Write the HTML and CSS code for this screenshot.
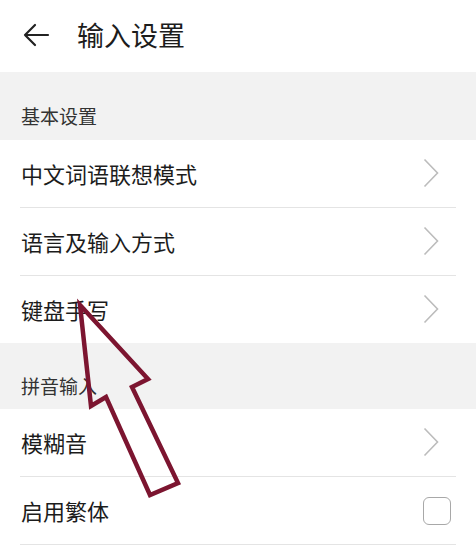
FILE: index.html
```html
<!DOCTYPE html>
<html lang="zh">
<head>
<meta charset="utf-8">
<link rel="stylesheet" href="styles.css">
</head>
<body>
<div class="page">
  <header class="topbar">
    <svg class="back" width="28" height="24" viewBox="0 0 28 24">
      <path d="M26 12H3M13 2L3 12l10 10" fill="none" stroke="#222" stroke-width="2.2" stroke-linecap="round" stroke-linejoin="round"/>
    </svg>
    <h1 class="title">输入设置</h1>
  </header>

  <div class="section">基本设置</div>
  <div class="row"><div class="inner line"><span class="label">中文词语联想模式</span><svg class="chev" width="16" height="30" viewBox="0 0 16 30"><path d="M1.5 1.5L14.5 15L1.5 28.5" fill="none" stroke="#bcbcbc" stroke-width="1.6"/></svg></div></div>
  <div class="row"><div class="inner line"><span class="label">语言及输入方式</span><svg class="chev" width="16" height="30" viewBox="0 0 16 30"><path d="M1.5 1.5L14.5 15L1.5 28.5" fill="none" stroke="#bcbcbc" stroke-width="1.6"/></svg></div></div>
  <div class="row"><div class="inner"><span class="label">键盘手写</span><svg class="chev" width="16" height="30" viewBox="0 0 16 30"><path d="M1.5 1.5L14.5 15L1.5 28.5" fill="none" stroke="#bcbcbc" stroke-width="1.6"/></svg></div></div>

  <div class="section s2">拼音输入</div>
  <div class="row"><div class="inner line"><span class="label">模糊音</span><svg class="chev" width="16" height="30" viewBox="0 0 16 30"><path d="M1.5 1.5L14.5 15L1.5 28.5" fill="none" stroke="#bcbcbc" stroke-width="1.6"/></svg></div></div>
  <div class="row"><div class="inner line"><span class="label">启用繁体</span><span class="check"></span></div></div>

  <svg class="pointer" width="476" height="549" viewBox="0 0 476 549">
    <polygon points="80,305 148,379 132,387 178,483 150,495 106,397 91,406" fill="none" stroke="#7c1530" stroke-width="4.5" stroke-linejoin="miter"/>
  </svg>
</div>
</body>
</html>
```

FILE: styles.css
```css
html, body {
  margin: 0;
  padding: 0;
  background: #fff;
}
.page {
  position: relative;
  width: 476px;
  height: 549px;
  overflow: hidden;
  font-family: "Noto Sans CJK SC", "Noto Sans", sans-serif;
  color: #1c1c1c;
}
.topbar {
  height: 72px;
  display: flex;
  align-items: center;
  padding-left: 22px;
  box-sizing: border-box;
}
.back {
  display: block;
  margin-top: -2px;
}
.title {
  margin: 0 0 0 27px;
  font-size: 27px;
  font-weight: 400;
  line-height: 1;
  margin-top: -3px;
}
.section {
  height: 68px;
  background: #f2f2f2;
  display: flex;
  align-items: center;
  padding: 18px 0 0 21px;
  box-sizing: border-box;
  font-size: 19px;
  color: #333;
}
.section.s2 {
  height: 66px;
}
.row {
  padding: 0 20px;
}
.inner {
  height: 67px;
  display: flex;
  align-items: center;
  justify-content: space-between;
  box-sizing: content-box;
}
.inner.line {
  border-bottom: 1px solid #e4e4e4;
}
.label {
  font-size: 22px;
  padding-left: 1px;
  margin-top: -2px;
}
.chev {
  display: block;
  margin-right: 17px;
  margin-top: -2px;
}
.check {
  width: 28px;
  height: 28px;
  border: 1.6px solid #a8a8a8;
  border-radius: 6px;
  box-sizing: border-box;
  margin-right: 5px;
}
.pointer {
  position: absolute;
  left: 0;
  top: 0;
  pointer-events: none;
}
```
